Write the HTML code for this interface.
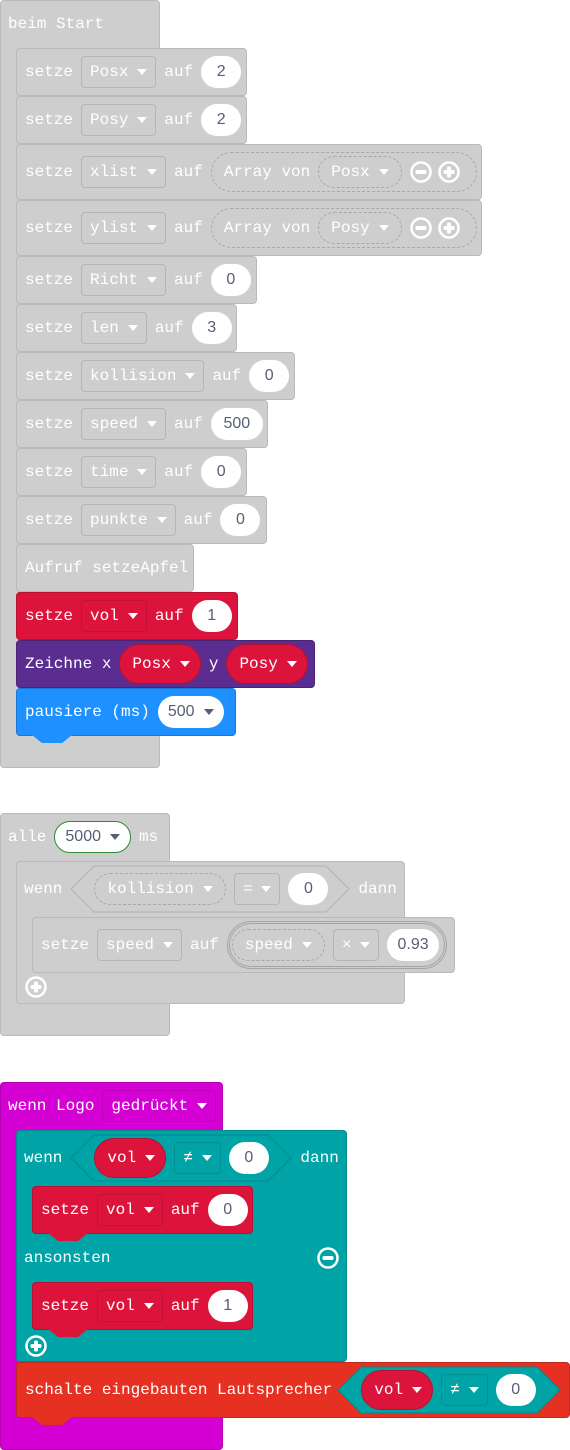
<!DOCTYPE html>
<html><head><meta charset="utf-8"><style>
*{box-sizing:border-box}
body{margin:0;width:570px;height:1450px;background:#fff;position:relative;overflow:hidden;font:16px "Liberation Mono","DejaVu Sans Mono",monospace;color:#fff}
.a{position:absolute}
.b{position:absolute;display:flex;align-items:center;padding-left:8px;border-radius:4px;white-space:pre}
.g{background:#cecece;border:1px solid #b9b9b9}
.r{background:#dc143c;border:1px solid #b8102f}
.p{background:#5c2d91;border:1px solid #4a2375}
.bl{background:#1e90ff;border:1px solid #1877d6}
.m{background:#d400d4;border:1px solid #b000b0}
.tl{background:#00a4a6;border:1px solid #008a8c}
.sp{background:#e63022;border:1px solid #c0281c}
.dd{height:32px;border:1px solid rgba(0,0,0,.12);border-radius:4px;padding:0 8px;display:flex;align-items:center;margin-right:8px;flex:none}
.ar{display:inline-block;width:0;height:0;border-top:6px solid #fff;border-left:5px solid transparent;border-right:5px solid transparent;margin-left:9px}
.ard{border-top-color:#575e75}
.t{margin-right:8px}
.n{background:#fff;color:#575e75;border-radius:16px;height:32px;min-width:40px;padding:0 10px;display:flex;align-items:center;justify-content:center;font-family:"Liberation Sans","DejaVu Sans",sans-serif;font-size:16px;margin-right:8px;flex:none}
.pill{height:32px;border-radius:16px;border:1px dashed rgba(0,0,0,.18);padding:0 12px;display:flex;align-items:center;margin-right:8px;flex:none}
.rp{height:40px;border-radius:20px;padding:0 10px 0 12px;display:flex;align-items:center;margin-right:8px;background:#dc143c;border:1px solid #b8102f}
.hex{position:relative;height:48px;display:flex;align-items:center;padding:0 24px;margin-right:8px;flex:none}
.hex svg{position:absolute;left:0;top:0}
.hex>span,.hex>div{position:relative}
.ic{margin-right:6px;flex:none}
.bump{position:absolute;height:8px;clip-path:polygon(0 0,100% 0,75% 100%,25% 100%)}
</style></head><body>

<div class="a g" style="left:0;top:0;width:160px;height:768px;border-radius:4px"></div>
<div class="b" style="left:0;top:0;width:160px;height:47px;">beim Start</div>

<div class="b g" style="left:16px;top:48px;width:231px;height:48px"><span class="t">setze</span><div class="dd">Posx<i class="ar"></i></div><span class="t">auf</span><div class="n">2</div></div>
<div class="b g" style="left:16px;top:96px;width:231px;height:48px"><span class="t">setze</span><div class="dd">Posy<i class="ar"></i></div><span class="t">auf</span><div class="n">2</div></div>
<div class="b g" style="left:16px;top:144px;width:466px;height:56px"><span class="t">setze</span><div class="dd">xlist<i class="ar"></i></div><span class="t">auf</span>
 <div style="height:40px;border-radius:20px;border:1px dashed rgba(0,0,0,.18);display:flex;align-items:center;padding:0 8px 0 12px;width:266px"><span class="t">Array von</span><div class="pill" style="padding:0 12px">Posx<i class="ar"></i></div>
 <svg class="ic" width="22" height="22" viewBox="0 0 22 22"><circle cx="11" cy="11" r="9.5" fill="none" stroke="#fff" stroke-width="2.5"/><rect x="5.5" y="9" width="11" height="4" rx="1.5" fill="#fff"/></svg>
 <svg class="ic" width="22" height="22" viewBox="0 0 22 22"><circle cx="11" cy="11" r="9.5" fill="none" stroke="#fff" stroke-width="2.5"/><rect x="5.5" y="9" width="11" height="4" rx="1.5" fill="#fff"/><rect x="9" y="5.5" width="4" height="11" rx="1.5" fill="#fff"/></svg></div></div>
<div class="b g" style="left:16px;top:200px;width:466px;height:56px"><span class="t">setze</span><div class="dd">ylist<i class="ar"></i></div><span class="t">auf</span>
 <div style="height:40px;border-radius:20px;border:1px dashed rgba(0,0,0,.18);display:flex;align-items:center;padding:0 8px 0 12px;width:266px"><span class="t">Array von</span><div class="pill" style="padding:0 12px">Posy<i class="ar"></i></div>
 <svg class="ic" width="22" height="22" viewBox="0 0 22 22"><circle cx="11" cy="11" r="9.5" fill="none" stroke="#fff" stroke-width="2.5"/><rect x="5.5" y="9" width="11" height="4" rx="1.5" fill="#fff"/></svg>
 <svg class="ic" width="22" height="22" viewBox="0 0 22 22"><circle cx="11" cy="11" r="9.5" fill="none" stroke="#fff" stroke-width="2.5"/><rect x="5.5" y="9" width="11" height="4" rx="1.5" fill="#fff"/><rect x="9" y="5.5" width="4" height="11" rx="1.5" fill="#fff"/></svg></div></div>
<div class="b g" style="left:16px;top:256px;width:241px;height:48px"><span class="t">setze</span><div class="dd">Richt<i class="ar"></i></div><span class="t">auf</span><div class="n">0</div></div>
<div class="b g" style="left:16px;top:304px;width:221px;height:48px"><span class="t">setze</span><div class="dd">len<i class="ar"></i></div><span class="t">auf</span><div class="n">3</div></div>
<div class="b g" style="left:16px;top:352px;width:279px;height:48px"><span class="t">setze</span><div class="dd">kollision<i class="ar"></i></div><span class="t">auf</span><div class="n">0</div></div>
<div class="b g" style="left:16px;top:400px;width:252px;height:48px"><span class="t">setze</span><div class="dd">speed<i class="ar"></i></div><span class="t">auf</span><div class="n" style="padding:0 8px;min-width:52px">500</div></div>
<div class="b g" style="left:16px;top:448px;width:231px;height:48px"><span class="t">setze</span><div class="dd">time<i class="ar"></i></div><span class="t">auf</span><div class="n">0</div></div>
<div class="b g" style="left:16px;top:496px;width:251px;height:48px"><span class="t">setze</span><div class="dd">punkte<i class="ar"></i></div><span class="t">auf</span><div class="n">0</div></div>
<div class="b g" style="left:16px;top:544px;width:178px;height:48px">Aufruf setzeApfel</div>
<div class="b r" style="left:16px;top:592px;width:222px;height:48px"><span class="t">setze</span><div class="dd">vol<i class="ar"></i></div><span class="t">auf</span><div class="n">1</div></div>
<div class="b p" style="left:16px;top:640px;width:299px;height:48px"><span class="t">Zeichne x</span><div class="rp">Posx<i class="ar"></i></div><span class="t">y</span><div class="rp">Posy<i class="ar"></i></div></div>
<div class="b bl" style="left:16px;top:688px;width:220px;height:48px"><span class="t">pausiere (ms)</span><div class="n" style="padding:0 10px">500<i class="ar ard"></i></div></div>
<div class="bump" style="left:32px;top:735px;width:40px;background:#1e90ff"></div>

<div class="a g" style="left:0;top:813px;width:170px;height:223px;border-radius:4px"></div>
<div class="b" style="left:0;top:813px;width:170px;height:47px"><span class="t">alle</span><div class="n" style="border:1px solid #2e8b2e;padding:0 10px">5000<i class="ar ard"></i></div><span>ms</span></div>
<div class="a g" style="left:16px;top:861px;width:389px;height:143px;border-radius:4px"></div>
<div class="b" style="left:16px;top:861px;width:389px;height:56px"><span class="t">wenn</span>
 <div class="hex" style="width:280px"><svg width="280" height="48"><polygon points="24,1 256,1 279,24 256,47 24,47 1,24" fill="#cecece" stroke="#b3b3b3"/></svg><div class="pill">kollision<i class="ar"></i></div><div class="dd" style="position:relative">=<i class="ar"></i></div><div class="n" style="position:relative">0</div></div><span>dann</span></div>
<div class="b g" style="left:32px;top:917px;width:423px;height:56px"><span class="t">setze</span><div class="dd">speed<i class="ar"></i></div><span class="t">auf</span>
 <div style="height:48px;border-radius:24px;border:3px double rgba(0,0,0,.2);display:flex;align-items:center;padding:0 2px;width:220px"><div class="pill">speed<i class="ar"></i></div><div class="dd">×<i class="ar"></i></div><div class="n" style="margin-right:0">0.93</div></div></div>
<svg class="a" style="left:25px;top:976px" width="22" height="22" viewBox="0 0 22 22"><circle cx="11" cy="11" r="9.5" fill="none" stroke="#fff" stroke-width="2.5"/><rect x="5.5" y="9" width="11" height="4" rx="1.5" fill="#fff"/><rect x="9" y="5.5" width="4" height="11" rx="1.5" fill="#fff"/></svg>

<div class="a m" style="left:0;top:1082px;width:223px;height:368px;border-radius:4px"></div>
<div class="b" style="left:0;top:1082px;width:223px;height:48px"><span class="t">wenn Logo</span><div class="dd">gedrückt<i class="ar"></i></div></div>
<div class="a tl" style="left:16px;top:1130px;width:331px;height:232px;border-radius:4px"></div>
<div class="b" style="left:16px;top:1130px;width:331px;height:56px"><span class="t">wenn</span>
 <div class="hex" style="width:222px;padding:0 0 0 24px"><svg width="222" height="48"><polygon points="24,1 198,1 221,24 198,47 24,47 1,24" fill="#00a4a6" stroke="#008a8c"/></svg><div class="rp" style="height:40px;position:relative">vol<i class="ar"></i></div><div class="dd" style="position:relative">≠<i class="ar"></i></div><div class="n" style="position:relative">0</div></div><span>dann</span></div>
<div class="b r" style="left:32px;top:1186px;width:221px;height:48px"><span class="t">setze</span><div class="dd">vol<i class="ar"></i></div><span class="t">auf</span><div class="n">0</div></div>
<div class="bump" style="left:48px;top:1233px;width:40px;background:#dc143c"></div>
<div class="b" style="left:16px;top:1234px;width:331px;height:48px">ansonsten</div>
<svg class="a" style="left:317px;top:1247px" width="22" height="22" viewBox="0 0 22 22"><circle cx="11" cy="11" r="9.5" fill="none" stroke="#fff" stroke-width="2.5"/><rect x="5.5" y="9" width="11" height="4" rx="1.5" fill="#fff"/></svg>
<div class="b r" style="left:32px;top:1282px;width:221px;height:48px"><span class="t">setze</span><div class="dd">vol<i class="ar"></i></div><span class="t">auf</span><div class="n">1</div></div>
<div class="bump" style="left:48px;top:1329px;width:40px;background:#dc143c"></div>
<svg class="a" style="left:25px;top:1335px" width="22" height="22" viewBox="0 0 22 22"><circle cx="11" cy="11" r="9.5" fill="none" stroke="#fff" stroke-width="2.5"/><rect x="5.5" y="9" width="11" height="4" rx="1.5" fill="#fff"/><rect x="9" y="5.5" width="4" height="11" rx="1.5" fill="#fff"/></svg>
<div class="b sp" style="left:16px;top:1362px;width:554px;height:56px"><span class="t">schalte eingebauten Lautsprecher</span>
 <div class="hex" style="width:224px;padding:0 0 0 24px;margin-left:-3px"><svg width="224" height="48"><polygon points="24,1 200,1 223,24 200,47 24,47 1,24" fill="#00a4a6" stroke="#008a8c"/></svg><div class="rp" style="position:relative">vol<i class="ar"></i></div><div class="dd" style="position:relative">≠<i class="ar"></i></div><div class="n" style="position:relative">0</div></div></div>
<div class="bump" style="left:32px;top:1417px;width:40px;background:#e63022"></div>
</body></html>
